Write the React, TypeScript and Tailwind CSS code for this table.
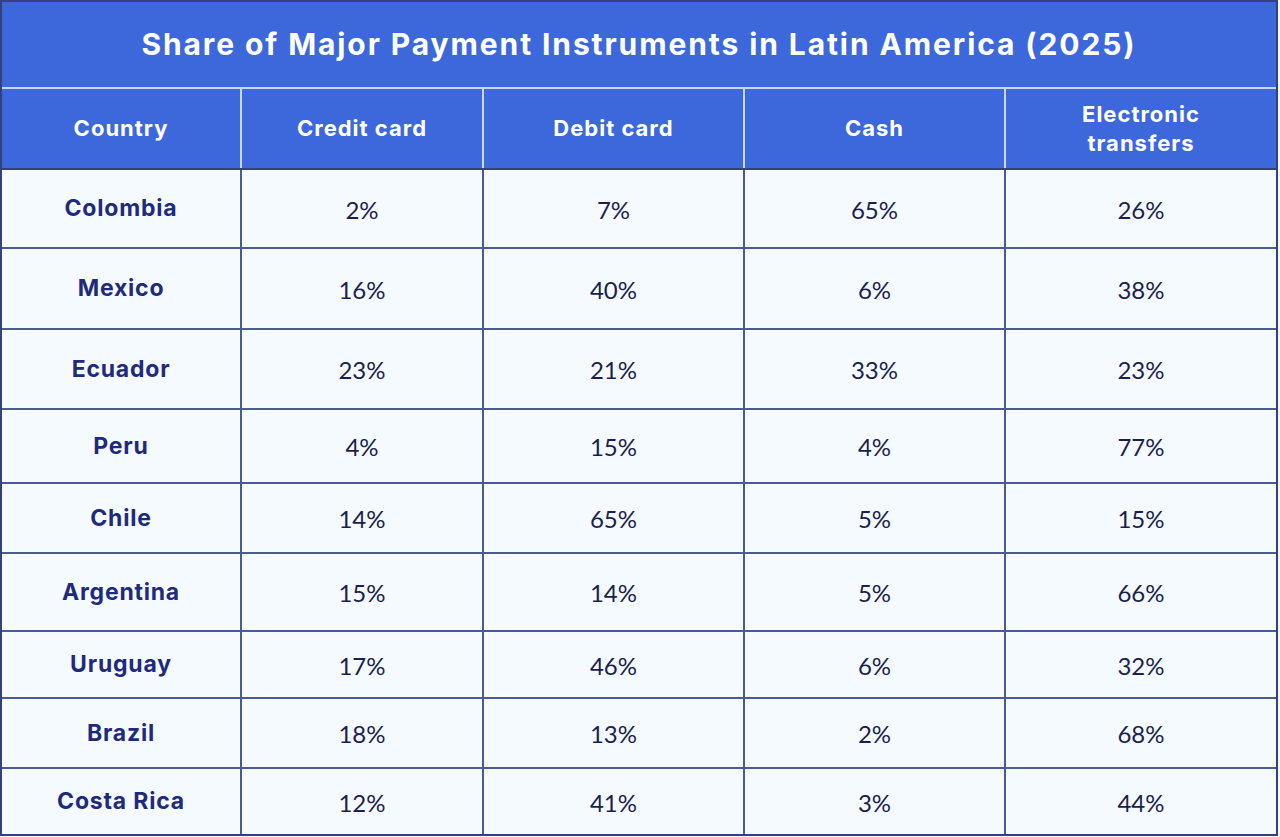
import React from "react";

const rows: [string, string, string, string, string, string][] = [
  ["Colombia", "2%", "7%", "65%", "26%", "h-[79px]"],
  ["Mexico", "16%", "40%", "6%", "38%", "h-[81px]"],
  ["Ecuador", "23%", "21%", "33%", "23%", "h-[80px]"],
  ["Peru", "4%", "15%", "4%", "77%", "h-[74px]"],
  ["Chile", "14%", "65%", "5%", "15%", "h-[70px]"],
  ["Argentina", "15%", "14%", "5%", "66%", "h-[78px]"],
  ["Uruguay", "17%", "46%", "6%", "32%", "h-[67px]"],
  ["Brazil", "18%", "13%", "2%", "68%", "h-[70px]"],
  ["Costa Rica", "12%", "41%", "3%", "44%", "h-[65px]"],
];

export default function App() {
  return (
    <div className="w-[1280px] h-[837px] bg-[#f3f8fc]">
      <div className="w-[1278px] h-[836px] border-2 border-[#34427c] bg-[#f4fafd] flex flex-col">
        <div className="h-[87px] bg-[#3d68dc] flex items-center justify-center text-white text-[30px] font-bold tracking-[1.9px] border-b-2 border-[#c9d7f2] font-['Inter','Noto_Sans',sans-serif]">
          Share of Major Payment Instruments in Latin America (2025)
        </div>
        <div className="h-[81px] bg-[#3d68dc] grid grid-cols-[240px_242px_261px_261px_1fr] text-white text-[22px] font-bold tracking-[1px] border-b-2 border-[#34427c] font-['Inter','Noto_Sans',sans-serif]">
          {["Country", "Credit card", "Debit card", "Cash", "Electronic transfers"].map((h, i) => (
            <div
              key={h}
              className={`flex items-center justify-center text-center leading-[29px] ${i < 4 ? "border-r-2 border-[#c9d7f2]" : "px-[60px]"}`}
            >
              {h}
            </div>
          ))}
        </div>
        {rows.map((r, ri) => (
          <div
            key={r[0]}
            className={`grid grid-cols-[240px_242px_261px_261px_1fr] ${r[5]} ${ri < rows.length - 1 ? "border-b-2 border-[#4a5a92]" : ""}`}
          >
            <div className="flex items-center justify-center border-r-2 border-[#4a5a92] text-[#1f2a7c] text-[23px] font-bold tracking-[0.8px] font-['Inter','Noto_Sans',sans-serif]">
              {r[0]}
            </div>
            {r.slice(1, 5).map((v, ci) => (
              <div
                key={ci}
                className={`flex items-center justify-center text-[#1b1f4d] text-[24px] pt-[2px] font-['Lato','Open_Sans',sans-serif] ${ci < 3 ? "border-r-2 border-[#4a5a92]" : ""}`}
              >
                {v}
              </div>
            ))}
          </div>
        ))}
      </div>
    </div>
  );
}
